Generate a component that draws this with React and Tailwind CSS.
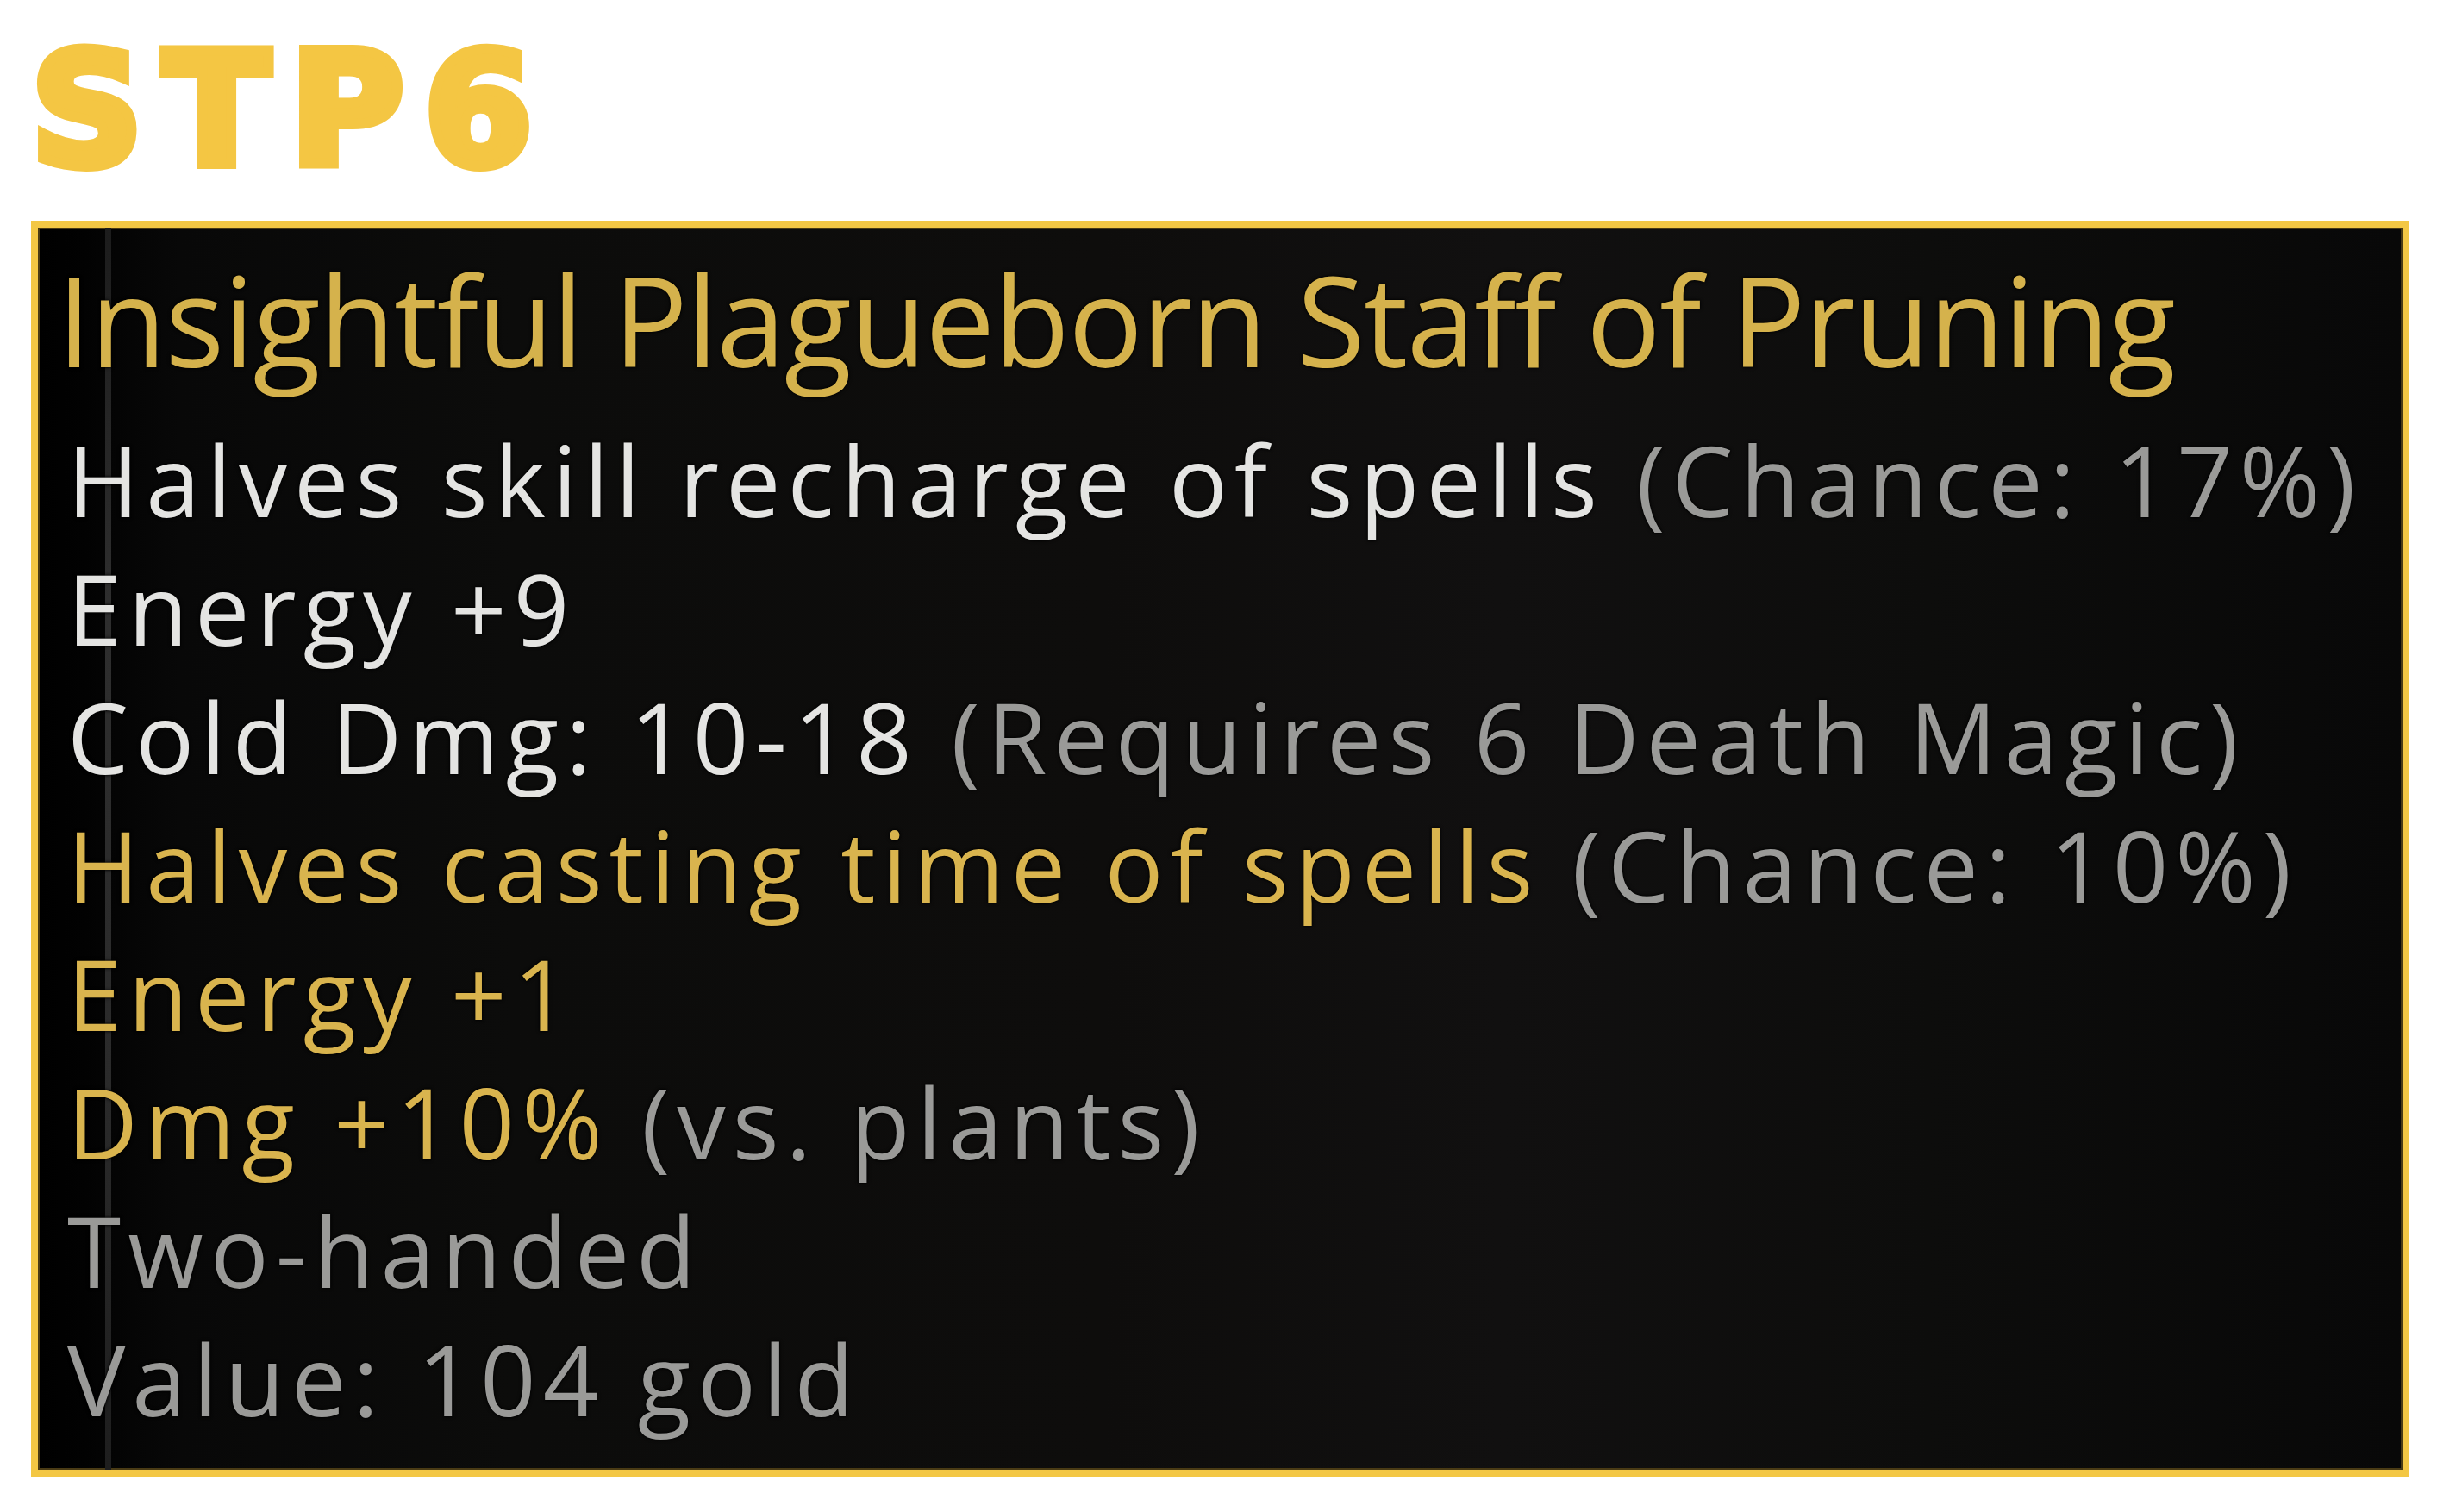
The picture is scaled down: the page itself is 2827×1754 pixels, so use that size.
import React from "react"

const lines = [
  { main: "Halves skill recharge of spells", note: "(Chance: 17%)", tone: "white" },
  { main: "Energy +9", tone: "white" },
  { main: "Cold Dmg: 10-18", note: "(Requires 6 Death Magic)", tone: "white" },
  { main: "Halves casting time of spells", note: "(Chance: 10%)", tone: "gold" },
  { main: "Energy +1", tone: "gold" },
  { main: "Dmg +10%", note: "(vs. plants)", tone: "gold" },
  { main: "Two-handed", tone: "grey" },
  { main: "Value: 104 gold", tone: "grey" },
]

const toneClass = {
  white: "text-[#e4e4e2]",
  gold: "text-[#d9b44e]",
  grey: "text-[#9a9a98]",
}

const ItemLine = ({ line }) => (
  <div className="h-[149px] leading-[149px] whitespace-nowrap">
    <span className={toneClass[line.tone]}>{line.main}</span>
    {line.note && <span className="text-[#9a9a98]"> {line.note}</span>}
  </div>
)

export default function App() {
  return (
    <div className="min-h-screen bg-white pl-[36px] pt-[10px] font-['Open_Sans',sans-serif]">
      <h1 className="h-[246px] leading-[236px] text-[180px] font-bold tracking-[24px] text-[#f4c643] [-webkit-text-stroke:12px_#f4c643] font-['DejaVu_Sans',sans-serif]">
        STP6
      </h1>

      <div className="relative w-[2759px] h-[1457px] border-[8px] border-[#f3c744] shadow-[inset_0_0_0_2px_#4a3b14] overflow-hidden bg-[linear-gradient(90deg,#000_0%,#020202_2%,#080808_6%,#0c0c0b_20%,#0e0d0c_45%,#111010_62%,#0d0d0c_80%,#080808_100%)]">
        <div className="absolute left-[78px] top-0 bottom-0 w-[7px] bg-[linear-gradient(180deg,#1c1c1c,#2e2e2e_30%,#2a2a2a_70%,#1e1e1e)]" />

        <div className="relative pl-[22px] pt-[26px] [text-shadow:0_0_4px_#000,0_0_2px_#000]">
          <div className="h-[160px] leading-[160px] text-[144px] text-[#d5b24c] tracking-[-1.5px] whitespace-nowrap">
            Insightful Plagueborn Staff of Pruning
          </div>
          <div className="mt-[32px] pl-[12px] text-[113px] tracking-[8px]">
            {lines.map((line, i) => (
              <ItemLine key={i} line={line} />
            ))}
          </div>
        </div>
      </div>
    </div>
  )
}
